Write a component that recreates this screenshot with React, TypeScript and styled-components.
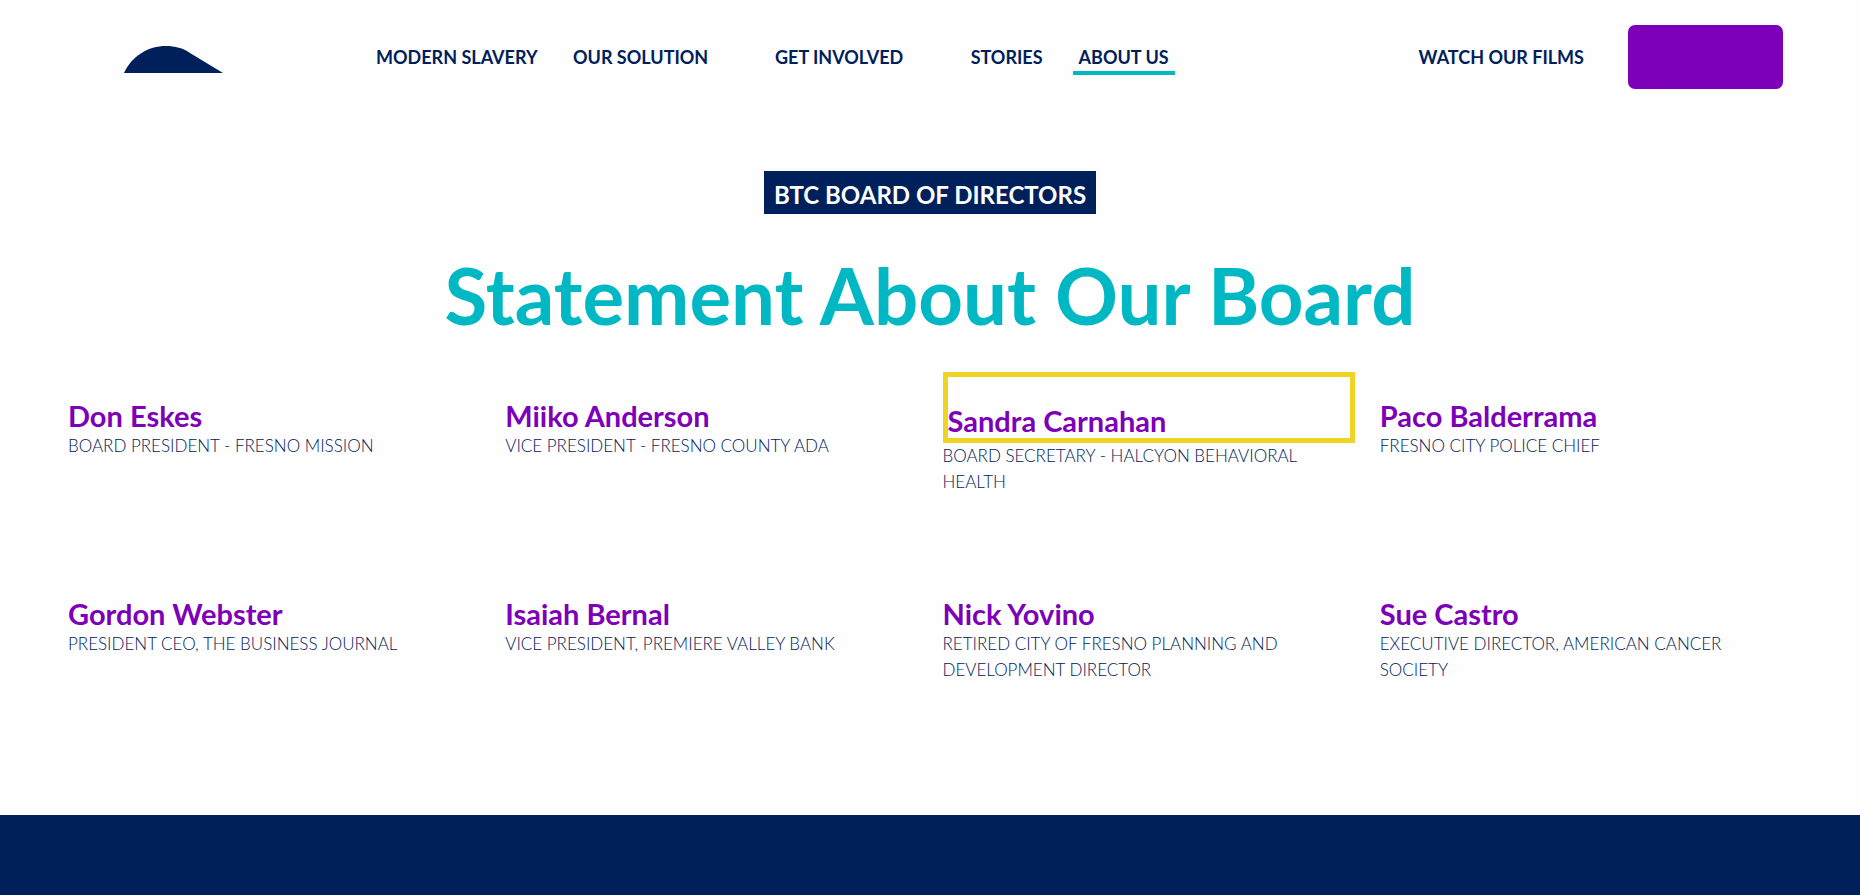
import React from 'react';
import styled, { createGlobalStyle } from 'styled-components';

const navy = '#00205b';
const teal = '#00b8c4';
const purple = '#7d00b8';
const yellow = '#f1d323';

const GlobalStyle = createGlobalStyle`
  *, *::before, *::after { box-sizing: border-box; }
  body {
    margin: 0;
    background: #fefefe;
    color: ${navy};
    font-family: Lato, 'Liberation Sans', sans-serif;
  }
`;

const Page = styled.div`
  min-height: 100vh;
  display: flex;
  flex-direction: column;
`;

const Header = styled.header`
  display: flex;
  align-items: center;
  padding: 25px 77px 25px 124px;
`;

const LogoLink = styled.a`
  display: block;
  margin: 5px 147px 0 0;
  line-height: 0;
`;

const Nav = styled.nav`
  flex: 1;
  display: flex;
  align-items: center;
`;

const NavItem = styled.div<{ $width: number; $last?: boolean }>`
  flex: 0 1 ${(p) => p.$width}px;
  display: flex;
  justify-content: center;
  margin-left: ${(p) => (p.$last ? 'auto' : '0')};
`;

const NavLink = styled.a<{ $active?: boolean }>`
  padding: 6px 6px 2px;
  border-bottom: 4px solid ${(p) => (p.$active ? teal : 'transparent')};
  color: ${navy};
  font-size: 18px;
  font-weight: 700;
  line-height: 24px;
  text-decoration: none;
  white-space: nowrap;
`;

const DonateButton = styled.button`
  width: 155px;
  height: 64px;
  margin-left: 38px;
  border: 0;
  border-radius: 7px;
  background: ${purple};
  cursor: pointer;
`;

const Main = styled.main`
  flex: 1;
  padding: 57px 68px 132px;
`;

const Intro = styled.section`
  display: flex;
  flex-direction: column;
  align-items: center;
  text-align: center;
`;

const Badge = styled.p`
  margin: 0;
  padding: 9px 10px 4px;
  background: ${navy};
  color: #fff;
  font-size: 24px;
  font-weight: 700;
  line-height: 30px;
`;

const Title = styled.h1`
  margin: 33px 0 29px;
  color: ${teal};
  font-size: 78px;
  font-weight: 700;
  line-height: 96px;
`;

const Board = styled.ul`
  display: grid;
  grid-template-columns: repeat(4, 1fr);
  gap: 75px 25px;
  margin: 0;
  padding: 0;
  list-style: none;
`;

const Name = styled.h2<{ $highlighted?: boolean }>`
  margin: 0;
  padding-top: 26px;
  border: ${(p) => (p.$highlighted ? `5px solid ${yellow}` : '0')};
  color: ${purple};
  font-size: 29px;
  font-weight: 700;
  line-height: 35px;
`;

const Role = styled.p`
  margin: 0;
  font-size: 17px;
  font-weight: 300;
  line-height: 26px;
`;

const Footer = styled.footer`
  height: 80px;
  background: ${navy};
`;

const links = [
  { label: 'MODERN SLAVERY', width: 173 },
  { label: 'OUR SOLUTION', width: 194 },
  { label: 'GET INVOLVED', width: 203 },
  { label: 'STORIES', width: 132 },
  { label: 'ABOUT US', width: 102, active: true },
];

const members = [
  { name: 'Don Eskes', role: 'BOARD PRESIDENT - FRESNO MISSION' },
  { name: 'Miiko Anderson', role: 'VICE PRESIDENT - FRESNO COUNTY ADA' },
  { name: 'Sandra Carnahan', role: 'BOARD SECRETARY - HALCYON BEHAVIORAL HEALTH', highlighted: true },
  { name: 'Paco Balderrama', role: 'FRESNO CITY POLICE CHIEF' },
  { name: 'Gordon Webster', role: 'PRESIDENT CEO, THE BUSINESS JOURNAL' },
  { name: 'Isaiah Bernal', role: 'VICE PRESIDENT, PREMIERE VALLEY BANK' },
  { name: 'Nick Yovino', role: 'RETIRED CITY OF FRESNO PLANNING AND DEVELOPMENT DIRECTOR' },
  { name: 'Sue Castro', role: 'EXECUTIVE DIRECTOR, AMERICAN CANCER SOCIETY' },
];

export default function App() {
  return (
    <>
      <GlobalStyle />
      <Page>
        <Header>
          <LogoLink href="#" aria-label="Home">
            <svg width="99" height="27" viewBox="0 0 99 27" aria-hidden="true">
              <path d="M0 27C8 10 24 0 42 0C51 0 59 2 66 7L99 27Z" fill={navy} />
            </svg>
          </LogoLink>
          <Nav>
            {links.map((link) => (
              <NavItem key={link.label} $width={link.width}>
                <NavLink href="#" $active={link.active}>{link.label}</NavLink>
              </NavItem>
            ))}
            <NavItem $width={174} $last>
              <NavLink href="#">WATCH OUR FILMS</NavLink>
            </NavItem>
          </Nav>
          <DonateButton type="button" aria-label="Donate" />
        </Header>
        <Main>
          <Intro>
            <Badge>BTC BOARD OF DIRECTORS</Badge>
            <Title>Statement About Our Board</Title>
          </Intro>
          <Board>
            {members.map((member) => (
              <li key={member.name}>
                <Name $highlighted={member.highlighted}>{member.name}</Name>
                <Role>{member.role}</Role>
              </li>
            ))}
          </Board>
        </Main>
        <Footer />
      </Page>
    </>
  );
}
